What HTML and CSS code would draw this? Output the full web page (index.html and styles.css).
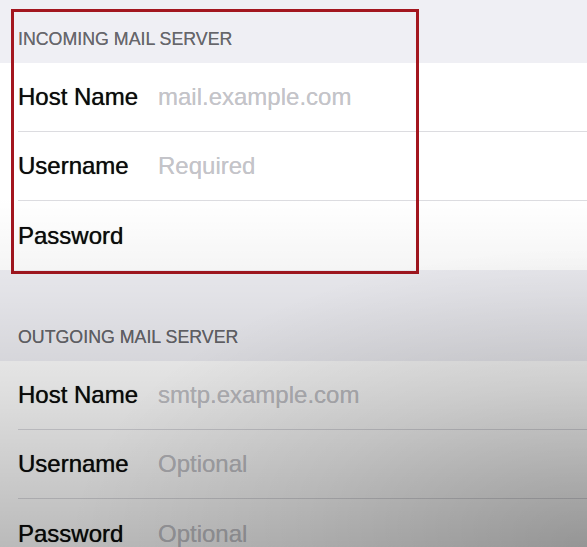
FILE: index.html
```html
<!DOCTYPE html>
<html>
<head>
<meta charset="utf-8">
<link rel="stylesheet" href="styles.css">
</head>
<body>
<div class="page">
  <div class="header first">INCOMING MAIL SERVER</div>
  <div class="group">
    <div class="row"><span class="label">Host Name</span><span class="value">mail.example.com</span></div>
    <div class="row"><span class="label">Username</span><span class="value">Required</span></div>
    <div class="row"><span class="label">Password</span><span class="value"></span></div>
  </div>
  <div class="header second">OUTGOING MAIL SERVER</div>
  <div class="group">
    <div class="row"><span class="label">Host Name</span><span class="value">smtp.example.com</span></div>
    <div class="row"><span class="label">Username</span><span class="value">Optional</span></div>
    <div class="row"><span class="label">Password</span><span class="value">Optional</span></div>
  </div>
  <div class="highlight"></div>
  <div class="shade"></div>
</div>
</body>
</html>
```
FILE: styles.css
```css
html, body {
  margin: 0;
  padding: 0;
  height: 547px;
  overflow: hidden;
}
body {
  background: #efeff4;
  font-family: "Liberation Sans", Arial, sans-serif;
}
.page {
  position: relative;
  width: 587px;
  height: 547px;
  overflow: hidden;
}
.header {
  display: flex;
  align-items: flex-end;
  box-sizing: border-box;
  padding: 0 0 14px 18px;
  font-size: 17.8px;
  color: #66666b;
  line-height: 20px;
  text-shadow: 0 0 0.6px rgba(80, 80, 85, 0.7);
}
.header.first { height: 63px; }
.header.second { height: 91px; }
.group {
  background: #ffffff;
}
.row {
  display: flex;
  align-items: center;
  height: 69px;
  box-sizing: border-box;
  margin-left: 18px;
  border-bottom: 1px solid #dcdce0;
  font-size: 24px;
}
.row:last-child { border-bottom: none; }
.label {
  width: 140px;
  color: #0a0a0a;
  text-shadow: 0 0 0.7px rgba(0, 0, 0, 0.8);
}
.value {
  color: #c4c4c9;
  text-shadow: 0 0 0.6px rgba(170, 170, 175, 0.6);
}
.highlight {
  position: absolute;
  left: 11px;
  top: 9px;
  width: 408px;
  height: 265px;
  box-sizing: border-box;
  border: 3px solid #a3161f;
  pointer-events: none;
}
.shade {
  position: absolute;
  inset: 0;
  pointer-events: none;
  background:
    radial-gradient(ellipse 520px 300px at 100% 100%, rgba(0,0,0,0.2) 0%, rgba(0,0,0,0.08) 55%, rgba(0,0,0,0) 100%),
    linear-gradient(to bottom, rgba(0,0,0,0) 0%, rgba(0,0,0,0) 36%, rgba(0,0,0,0.05) 53%, rgba(0,0,0,0.13) 72%, rgba(0,0,0,0.27) 100%);
}
```
